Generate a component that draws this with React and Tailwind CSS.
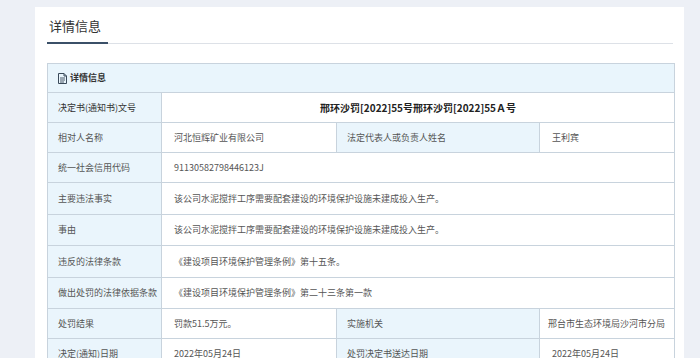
import React from "react";

const FONT = { fontFamily: '"Microsoft YaHei", "Noto Sans CJK SC", "Noto Sans", sans-serif' };

function DocIcon() {
  return (
    <svg width="9" height="11" viewBox="0 0 9 11" className="mr-[3px] shrink-0">
      <path d="M0.5 0.5 H6 L8.5 3 V10.5 H0.5 Z" fill="none" stroke="#3a4a5a" strokeWidth="1" />
      <path d="M6 0.5 V3 H8.5" fill="none" stroke="#3a4a5a" strokeWidth="1" />
      <path d="M2 5 H7 M2 7 H7 M2 9 H6" stroke="#3a4a5a" strokeWidth="0.9" />
    </svg>
  );
}

const L = "border border-[#c8d3dd] bg-[#eaf5fc] pl-[10px] text-[#555] text-[9px] align-middle whitespace-nowrap";
const V = "border border-[#c8d3dd] bg-white pl-[12px] text-[#555] text-[9px] align-middle whitespace-nowrap";

export default function App() {
  return (
    <div className="w-[700px] h-[358px] overflow-hidden bg-[#edf0f6] pl-[35px] pt-[7px]" style={FONT}>
      <div className="w-[649px] h-[400px] bg-white pt-[9px] px-[12px]">
        <div className="flex border-b border-[#dde1e7] mr-[-1px]">
          <div className="w-[61px] pl-[2px] pb-[6px] leading-[20px] text-[13px] text-[#333] border-b-2 border-[#3b5068] -mb-px">
            详情信息
          </div>
        </div>
        <table className="mt-[19px] w-[627px] table-fixed border-collapse">
          <colgroup>
            <col className="w-[114px]" />
            <col className="w-[175px]" />
            <col className="w-[203px]" />
            <col className="w-[135px]" />
          </colgroup>
          <tbody>
            <tr className="h-[29px]">
              <td colSpan={4} className="border border-[#c8d3dd] bg-[#e9f5fc] pl-[10px] align-middle">
                <div className="flex items-center text-[9px] font-bold text-[#333]">
                  <DocIcon />
                  详情信息
                </div>
              </td>
            </tr>
            <tr className="h-[30px]">
              <td className={L + " !text-[#333]"}>决定书(通知书)文号</td>
              <td colSpan={3} className="border border-[#c8d3dd] bg-white text-center align-middle text-[10px] font-semibold text-[#222] whitespace-nowrap">
                邢环沙罚[2022]55号邢环沙罚[2022]55Ａ号
              </td>
            </tr>
            <tr className="h-[30px]">
              <td className={L}>相对人名称</td>
              <td className={V}>河北恒辉矿业有限公司</td>
              <td className={L}>法定代表人或负责人姓名</td>
              <td className={V}>王利宾</td>
            </tr>
            <tr className="h-[30px]">
              <td className={L}>统一社会信用代码</td>
              <td colSpan={3} className={V}>91130582798446123J</td>
            </tr>
            <tr className="h-[32px]">
              <td className={L}>主要违法事实</td>
              <td colSpan={3} className={V}>该公司水泥搅拌工序需要配套建设的环境保护设施未建成投入生产。</td>
            </tr>
            <tr className="h-[31px]">
              <td className={L}>事由</td>
              <td colSpan={3} className={V}>该公司水泥搅拌工序需要配套建设的环境保护设施未建成投入生产。</td>
            </tr>
            <tr className="h-[32px]">
              <td className={L}>违反的法律条款</td>
              <td colSpan={3} className={V}>《建设项目环境保护管理条例》第十五条。</td>
            </tr>
            <tr className="h-[31px]">
              <td className={L}>做出处罚的法律依据条款</td>
              <td colSpan={3} className={V}>《建设项目环境保护管理条例》第二十三条第一款</td>
            </tr>
            <tr className="h-[30px]">
              <td className={L}>处罚结果</td>
              <td className={V}>罚款51.5万元。</td>
              <td className={L}>实施机关</td>
              <td className={V + " !pl-[8px]"}>邢台市生态环境局沙河市分局</td>
            </tr>
            <tr className="h-[30px]">
              <td className={L}>决定(通知)日期</td>
              <td className={V}>2022年05月24日</td>
              <td className={L}>处罚决定书送达日期</td>
              <td className={V}>2022年05月24日</td>
            </tr>
          </tbody>
        </table>
      </div>
    </div>
  );
}
